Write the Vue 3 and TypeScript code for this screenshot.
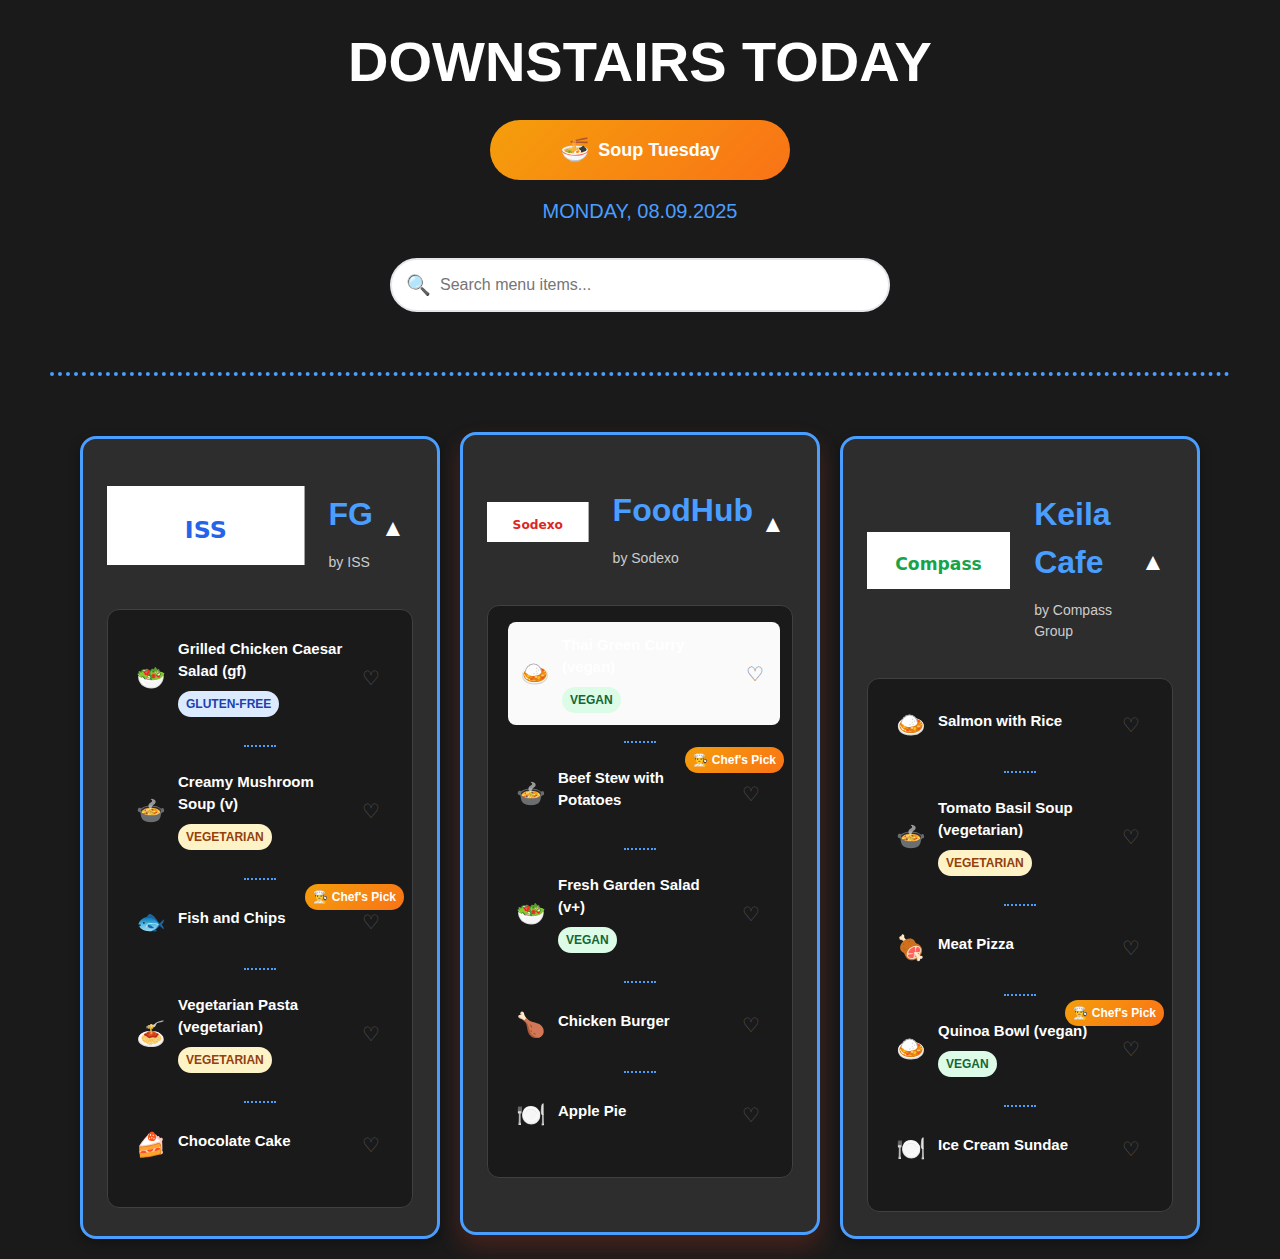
<script setup lang="ts">
import { computed, reactive, ref } from 'vue'

interface Dish {
  name: string
  icon: string
  tag?: 'gluten-free' | 'vegetarian' | 'vegan'
  pick?: boolean
  active?: boolean
}

interface Restaurant {
  name: string
  company: string
  logo: string
  color: string
  raised?: boolean
  dishes: Dish[]
}

const restaurants: Restaurant[] = [
  {
    name: 'FG',
    company: 'ISS',
    logo: 'ISS',
    color: '#2563eb',
    dishes: [
      { name: 'Grilled Chicken Caesar Salad (gf)', icon: '🥗', tag: 'gluten-free' },
      { name: 'Creamy Mushroom Soup (v)', icon: '🍲', tag: 'vegetarian' },
      { name: 'Fish and Chips', icon: '🐟', pick: true },
      { name: 'Vegetarian Pasta (vegetarian)', icon: '🍝', tag: 'vegetarian' },
      { name: 'Chocolate Cake', icon: '🍰' },
    ],
  },
  {
    name: 'FoodHub',
    company: 'Sodexo',
    logo: 'Sodexo',
    color: '#dc2626',
    raised: true,
    dishes: [
      { name: 'Thai Green Curry (vegan)', icon: '🍛', tag: 'vegan', active: true },
      { name: 'Beef Stew with Potatoes', icon: '🍲', pick: true },
      { name: 'Fresh Garden Salad (v+)', icon: '🥗', tag: 'vegan' },
      { name: 'Chicken Burger', icon: '🍗' },
      { name: 'Apple Pie', icon: '🍽️' },
    ],
  },
  {
    name: 'Keila Cafe',
    company: 'Compass Group',
    logo: 'Compass',
    color: '#16a34a',
    dishes: [
      { name: 'Salmon with Rice', icon: '🍛' },
      { name: 'Tomato Basil Soup (vegetarian)', icon: '🍲', tag: 'vegetarian' },
      { name: 'Meat Pizza', icon: '🍖' },
      { name: 'Quinoa Bowl (vegan)', icon: '🍛', tag: 'vegan', pick: true },
      { name: 'Ice Cream Sundae', icon: '🍽️' },
    ],
  },
]

const query = ref('')
const collapsed = reactive<Record<string, boolean>>({})
const favourites = reactive<Record<string, boolean>>({})

const visible = computed(() => {
  const term = query.value.trim().toLowerCase()
  return restaurants.map((r) => ({
    ...r,
    dishes: r.dishes.filter((d) => d.name.toLowerCase().includes(term)),
  }))
})
</script>

<template>
  <div class="page">
    <header class="top">
      <h1>DOWNSTAIRS TODAY</h1>
      <p class="special"><span class="special-icon">🍜</span>Soup Tuesday</p>
      <p class="date">MONDAY, 08.09.2025</p>
      <label class="search">
        <span class="search-icon">🔍</span>
        <input v-model="query" type="text" placeholder="Search menu items..." aria-label="Search menu items" />
      </label>
    </header>

    <main class="grid">
      <section v-for="r in visible" :key="r.name" class="card" :class="{ raised: r.raised }">
        <div class="card-head">
          <svg class="logo" viewBox="0 0 200 80" role="img" :aria-label="r.logo">
            <rect width="200" height="80" fill="#fff" />
            <text x="100" y="53" text-anchor="middle" :fill="r.color">{{ r.logo }}</text>
          </svg>
          <div class="title">
            <h2>{{ r.name }}</h2>
            <p>by {{ r.company }}</p>
          </div>
          <button
            class="toggle"
            type="button"
            :aria-expanded="!collapsed[r.name]"
            :aria-label="'Toggle ' + r.name"
            @click="collapsed[r.name] = !collapsed[r.name]"
          >{{ collapsed[r.name] ? '▼' : '▲' }}</button>
        </div>

        <ul v-if="!collapsed[r.name]" class="menu">
          <li v-for="d in r.dishes" :key="d.name">
            <div class="dish" :class="{ active: d.active }">
              <span class="dish-icon">{{ d.icon }}</span>
              <div class="dish-text">
                <h3>{{ d.name }}</h3>
                <span v-if="d.tag" class="tag" :class="d.tag">{{ d.tag.toUpperCase() }}</span>
              </div>
              <button
                class="heart"
                type="button"
                :aria-label="'Favourite ' + d.name"
                :aria-pressed="!!favourites[d.name]"
                @click="favourites[d.name] = !favourites[d.name]"
              >{{ favourites[d.name] ? '♥' : '♡' }}</button>
              <span v-if="d.pick" class="pick">👨‍🍳 Chef's Pick</span>
            </div>
          </li>
        </ul>
      </section>
    </main>
  </div>
</template>

<style>
body {
  margin: 0;
  background: #1a1a1a;
}
</style>

<style scoped>
.page {
  box-sizing: border-box;
  padding: 20px 50px;
  background: #1a1a1a;
  color: #fff;
  font-family: "Liberation Sans", Arial, sans-serif;
  font-size: 16px;
  line-height: 24px;
}
h1, h2, h3, p, ul {
  margin: 0;
  padding: 0;
}
.top {
  display: flex;
  flex-direction: column;
  align-items: center;
  padding-bottom: 60px;
  border-bottom: 4px dotted #4a9eff;
}
h1 {
  margin-bottom: 16px;
  font-size: 56px;
  line-height: 84px;
  text-align: center;
}
.special {
  box-sizing: border-box;
  display: flex;
  align-items: center;
  justify-content: center;
  gap: 8px;
  width: 300px;
  height: 60px;
  margin-bottom: 16px;
  border-radius: 30px;
  background: linear-gradient(135deg, #f59e0b, #f97316);
  font-size: 18px;
  font-weight: 700;
}
.special-icon {
  font-size: 24px;
}
.date {
  margin-bottom: 32px;
  color: #4a9eff;
  font-size: 20px;
  line-height: 30px;
}
.search {
  box-sizing: border-box;
  display: flex;
  align-items: center;
  gap: 9px;
  width: 100%;
  max-width: 500px;
  height: 54px;
  padding: 0 14px;
  border: 2px solid #e5e7eb;
  border-radius: 27px;
  background: #fff;
}
.search-icon {
  font-size: 20px;
}
.search input {
  flex: 1;
  min-width: 0;
  padding: 0;
  border: 0;
  outline: 0;
  background: none;
  color: #1a1a1a;
  font: inherit;
}
.search input::placeholder {
  color: #757575;
}
.grid {
  display: grid;
  grid-template-columns: repeat(3, minmax(0, 1fr));
  gap: 20px;
  padding: 60px 30px 0;
}
.card {
  padding: 24px;
  border: 3px solid #4a9eff;
  border-radius: 16px;
  background: #2d2d2d;
  box-shadow: 0 4px 12px rgba(0, 0, 0, 0.3);
}
.card.raised {
  transform: translateY(-4px);
  box-shadow: 0 12px 24px rgba(255, 68, 40, 0.2);
}
.card-head {
  display: flex;
  align-items: center;
  margin-bottom: 20px;
  padding: 16px 0;
}
.logo {
  flex: 0 1 224px;
  min-width: 0;
  margin-right: 24px;
}
.logo text {
  font: 700 24px "DejaVu Sans", sans-serif;
}
.title {
  flex: 1 1 auto;
}
.title h2 {
  margin: 11px 0 14px;
  color: #4a9eff;
  font-size: 32px;
  line-height: 48px;
}
.title p {
  color: #ccc;
  font-size: 14px;
  line-height: 21px;
}
.toggle {
  flex: none;
  width: 40px;
  padding: 3px 0 0;
  border: 0;
  background: none;
  color: #fff;
  font: inherit;
  font-size: 24px;
  line-height: 36px;
  cursor: pointer;
}
.menu {
  padding: 16px;
  border: 1px solid #404040;
  border-radius: 12px;
  background: #1a1a1a;
  list-style: none;
}
.menu li {
  padding-bottom: 16px;
}
.menu li + li::before {
  content: "";
  display: block;
  width: 32px;
  margin: 0 auto 12px;
  border-top: 2px dotted #4a9eff;
}
.dish {
  position: relative;
  display: flex;
  align-items: center;
  gap: 12px;
  padding: 12px;
  border-radius: 8px;
}
.dish.active {
  transform: translateX(4px);
  background: #fafafa;
}
.dish-icon {
  flex: none;
  width: 30px;
  font-size: 24px;
  line-height: 36px;
  text-align: center;
}
.dish-text {
  flex: 1;
  min-width: 0;
}
.dish h3 {
  margin-bottom: 9px;
  font-size: 15px;
  line-height: 22px;
}
.tag,
.pick {
  display: block;
  width: fit-content;
  padding: 4px 8px;
  border-radius: 13px;
  font-size: 12px;
  font-weight: 700;
  line-height: 18px;
  white-space: nowrap;
}
.gluten-free {
  background: #dbeafe;
  color: #1e40af;
}
.vegetarian {
  background: #fef3c7;
  color: #92400e;
}
.vegan {
  background: #dcfce7;
  color: #166534;
}
.heart {
  flex: none;
  width: 26px;
  padding: 0;
  border: 0;
  background: none;
  color: #555;
  font: inherit;
  font-size: 20px;
  line-height: 30px;
  cursor: pointer;
}
.active .heart {
  color: #6b7280;
}
.pick {
  position: absolute;
  top: -8px;
  right: -8px;
  background: linear-gradient(135deg, #f59e0b, #f97316);
}
</style>
